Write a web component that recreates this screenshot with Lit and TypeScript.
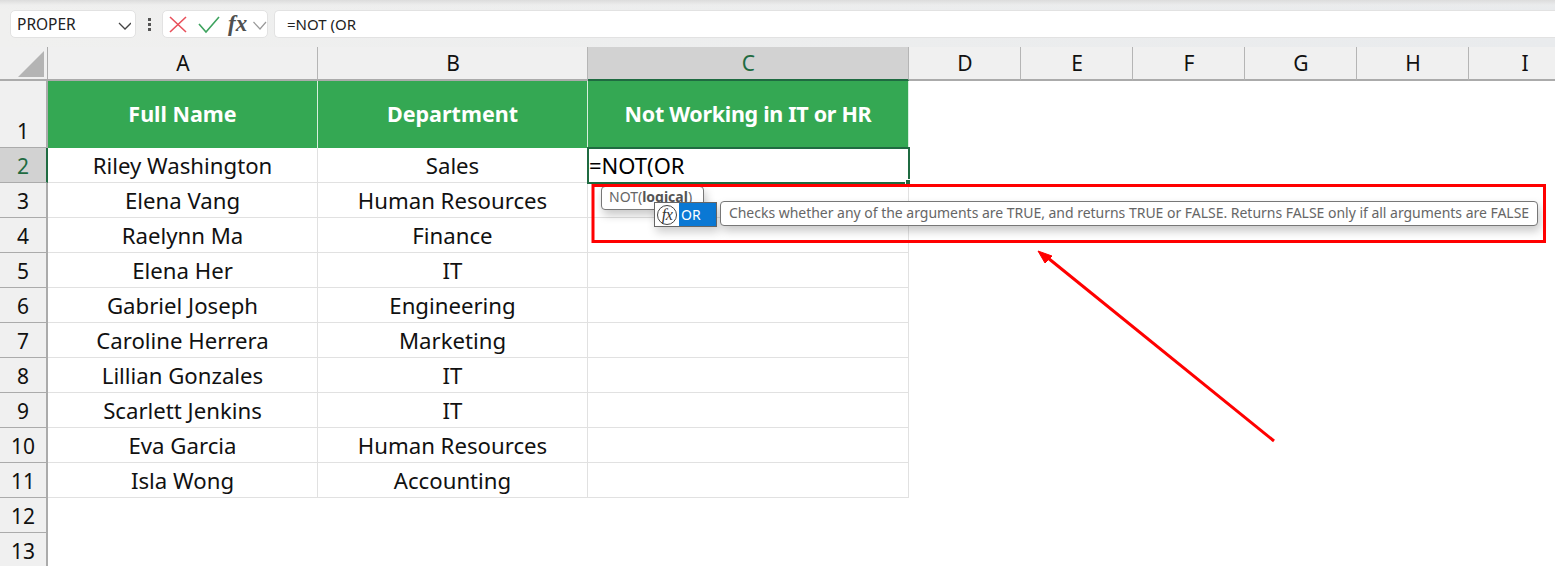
import { LitElement, html, css, svg } from "lit";
import { customElement } from "lit/decorators.js";

const ROWS: [string, string][] = [
  ["Riley Washington", "Sales"],
  ["Elena Vang", "Human Resources"],
  ["Raelynn Ma", "Finance"],
  ["Elena Her", "IT"],
  ["Gabriel Joseph", "Engineering"],
  ["Caroline Herrera", "Marketing"],
  ["Lillian Gonzales", "IT"],
  ["Scarlett Jenkins", "IT"],
  ["Eva Garcia", "Human Resources"],
  ["Isla Wong", "Accounting"],
];
const COLS = ["A", "B", "C", "D", "E", "F", "G", "H", "I"];

@customElement("app-root")
export class AppRoot extends LitElement {
  static styles = css`
    :host {
      display: block;
      position: relative;
      width: 1555px;
      height: 566px;
      overflow: hidden;
      background: #fff;
      font-family: "Noto Sans", "Open Sans", sans-serif;
      color: #111;
    }
    .ribbon {
      height: 47px;
      box-sizing: border-box;
      padding: 10px 0 9px 10px;
      display: flex;
      background: linear-gradient(#dcdcdc 0, rgba(236, 236, 236, 0.4) 5px, rgba(240, 240, 240, 0) 9px),
        linear-gradient(90deg, #f0f0ef, #e9ebed);
    }
    .box {
      box-sizing: border-box;
      height: 28px;
      background: #fff;
      border: 1px solid #e2e2e2;
      border-radius: 5px;
      display: flex;
      align-items: center;
    }
    .name {
      width: 126px;
      padding: 0 4px 0 6px;
      justify-content: space-between;
      font-size: 15.5px;
      color: #222;
    }
    .dots {
      width: 26px;
      display: flex;
      flex-direction: column;
      align-items: center;
      justify-content: center;
      gap: 2px;
    }
    .dots i {
      width: 3px;
      height: 3px;
      background: #555;
    }
    .actions {
      width: 106px;
    }
    .actions svg {
      display: block;
      flex: none;
    }
    .ic-x {
      margin-left: 4px;
    }
    .ic-check {
      margin-left: 8px;
    }
    .fx-label {
      font-family: "Liberation Serif", serif;
      font-style: italic;
      font-weight: 700;
      font-size: 23px;
      line-height: 24px;
      color: #505050;
      margin: -1px 0 0 7px;
      width: 25px;
      flex: none;
    }
    .formula {
      flex: 1;
      margin-left: 6px;
      padding-left: 12px;
      font-size: 15px;
      color: #222;
      border-right: none;
      border-radius: 5px 0 0 5px;
    }
    .sheet {
      display: grid;
      grid-template-columns: 48px 270px 270px 321px repeat(6, 112px);
      grid-template-rows: 34px 67px repeat(12, 35px);
    }
    .corner,
    .ch,
    .rh {
      box-sizing: border-box;
      background: #f0f0f0;
      display: flex;
      justify-content: center;
    }
    .corner {
      border-right: 1px solid #ababab;
      border-bottom: 2px solid #ababab;
      position: relative;
    }
    .corner svg {
      position: absolute;
      left: 18px;
      top: 4px;
    }
    .ch {
      align-items: center;
      font-size: 21px;
      border-right: 1px solid #b5b5b5;
      border-bottom: 2px solid #ababab;
      padding: 0 0 1px 1px;
      color: #111;
    }
    .ch.sel {
      background: #d2d2d2;
      color: #1f6b41;
      border-bottom-color: #1f6b41;
    }
    .rh {
      align-items: flex-end;
      font-size: 21px;
      line-height: 31px;
      border-right: 2px solid #ababab;
      border-bottom: 1px solid #ababab;
      color: #111;
    }
    .rh.sel {
      background: #d2d2d2;
      color: #1f6b41;
      border-right-color: #1f6b41;
    }
    .c {
      box-sizing: border-box;
      border-right: 1px solid #e1e1e1;
      border-bottom: 1px solid #e1e1e1;
      font-size: 22.2px;
      display: flex;
      align-items: center;
      justify-content: center;
      white-space: nowrap;
      color: #111;
      padding-top: 1px;
    }
    .head {
      background: #34a853;
      color: #fff;
      font-weight: 700;
      font-size: 21.5px;
      border-right: 1px solid #d7eedd;
      border-bottom: none;
      padding-top: 0;
      padding-bottom: 3px;
    }
    .tight {
      letter-spacing: -0.3px;
    }
    .editing {
      position: relative;
      justify-content: flex-start;
      padding: 0 0 0 1px;
      font-size: 22px;
      color: #000;
      outline: 2px solid #1f6b41;
      outline-offset: -1px;
      background: #fff;
      z-index: 1;
    }
    .handle {
      position: absolute;
      right: -3px;
      bottom: -3px;
      width: 4px;
      height: 4px;
      background: #1f6b41;
      border: 1px solid #fff;
    }
    .tip {
      position: absolute;
      box-sizing: border-box;
      background: #fff;
      border: 1px solid #777;
      border-radius: 4px;
      color: #666;
      white-space: nowrap;
      box-shadow: 2px 5px 10px rgba(0, 0, 0, 0.22);
      z-index: 2;
    }
    .sig {
      left: 601px;
      top: 186px;
      width: 103px;
      height: 24px;
      font-size: 14px;
      line-height: 19px;
      padding-left: 7px;
    }
    .sig b {
      color: #555;
    }
    .desc {
      left: 720px;
      top: 201px;
      width: 818px;
      height: 25px;
      font-size: 14px;
      line-height: 21px;
      text-align: center;
      letter-spacing: -0.02px;
      z-index: 4;
    }
    .ac {
      position: absolute;
      left: 654px;
      top: 202px;
      width: 63px;
      height: 25px;
      box-sizing: border-box;
      border: 1px solid #666;
      background: #fff;
      display: flex;
      z-index: 3;
      box-shadow: 2px 5px 10px rgba(0, 0, 0, 0.2);
    }
    .ac-ic {
      width: 24px;
      display: flex;
      align-items: center;
      justify-content: center;
    }
    .ac-ic span {
      font-family: "Liberation Serif", serif;
      font-style: italic;
      font-size: 16px;
      color: #333;
      letter-spacing: -0.5px;
      border: 1.5px solid #444;
      border-radius: 50%;
      width: 20px;
      height: 20px;
      box-sizing: border-box;
      display: flex;
      align-items: center;
      justify-content: center;
      line-height: 1;
    }
    .ac-t {
      flex: 1;
      background: #0a78d4;
      color: #fff;
      font-size: 14px;
      line-height: 23px;
      padding-left: 2px;
    }
    .mark {
      position: absolute;
      inset: 0;
      z-index: 5;
      pointer-events: none;
    }
  `;

  render() {
    return html`
      <div class="ribbon">
        <div class="box name">
          <span>PROPER</span>
          <svg width="14" height="14" viewBox="0 0 14 14"><path d="M2 6l6 6 6-6" fill="none" stroke="#444" stroke-width="1.3" /></svg>
        </div>
        <div class="dots"><i></i><i></i><i></i></div>
        <div class="box actions">
          <svg class="ic-x" width="22" height="22" viewBox="0 0 22 22"><path d="M3 4l16 15M19 4L3 19" stroke="#e8505b" stroke-width="1.6" fill="none" /></svg>
          <svg class="ic-check" width="24" height="20" viewBox="0 0 24 20"><path d="M2 10l7 8L22 3" stroke="#3ea35f" stroke-width="1.6" fill="none" /></svg>
          <span class="fx-label">fx</span>
          <svg width="14" height="14" viewBox="0 0 14 14"><path d="M0.5 5L7 12l6-7" fill="none" stroke="#999" stroke-width="1.2" /></svg>
        </div>
        <div class="box formula"><span>=NOT (OR</span></div>
      </div>
      <div class="sheet">
        <div class="corner">
          <svg width="27" height="27" viewBox="0 0 27 27"><path d="M26 0V26H0Z" fill="#b4b4b4" /></svg>
        </div>
        ${COLS.map((c) => html`<div class="ch ${c === "C" ? "sel" : ""}">${c}</div>`)}

        <div class="rh">1</div>
        <div class="c head">Full Name</div>
        <div class="c head">Department</div>
        <div class="c head tight">Not Working in IT or HR</div>
        ${COLS.slice(3).map(() => html`<div></div>`)}

        ${ROWS.map(
          (r, i) => html`
            <div class="rh ${i === 0 ? "sel" : ""}">${i + 2}</div>
            <div class="c">${r[0]}</div>
            <div class="c">${r[1]}</div>
            ${i === 0
              ? html`<div class="c editing">=NOT(OR<span class="handle"></span></div>`
              : html`<div class="c"></div>`}
            ${COLS.slice(3).map(() => html`<div></div>`)}
          `
        )}
        <div class="rh">12</div>
        ${COLS.map(() => html`<div></div>`)}
        <div class="rh">13</div>
        ${COLS.map(() => html`<div></div>`)}
      </div>

      <div class="tip sig">NOT(<b>logical</b>)</div>
      <div class="ac">
        <div class="ac-ic"><span>fx</span></div>
        <div class="ac-t">OR</div>
      </div>
      <div class="tip desc">Checks whether any of the arguments are TRUE, and returns TRUE or FALSE. Returns FALSE only if all arguments are FALSE</div>

      <svg class="mark" width="1555" height="566" viewBox="0 0 1555 566">
        ${svg`<rect x="593" y="185.5" width="951.5" height="56" fill="none" stroke="#f00" stroke-width="3"/>
        <line x1="1274" y1="441" x2="1048" y2="258" stroke="#f00" stroke-width="3"/>
        <path d="M1038 251L1052 256L1045 263Z" fill="#f00" stroke="#f00" stroke-width="1"/>`}
      </svg>
    `;
  }
}
